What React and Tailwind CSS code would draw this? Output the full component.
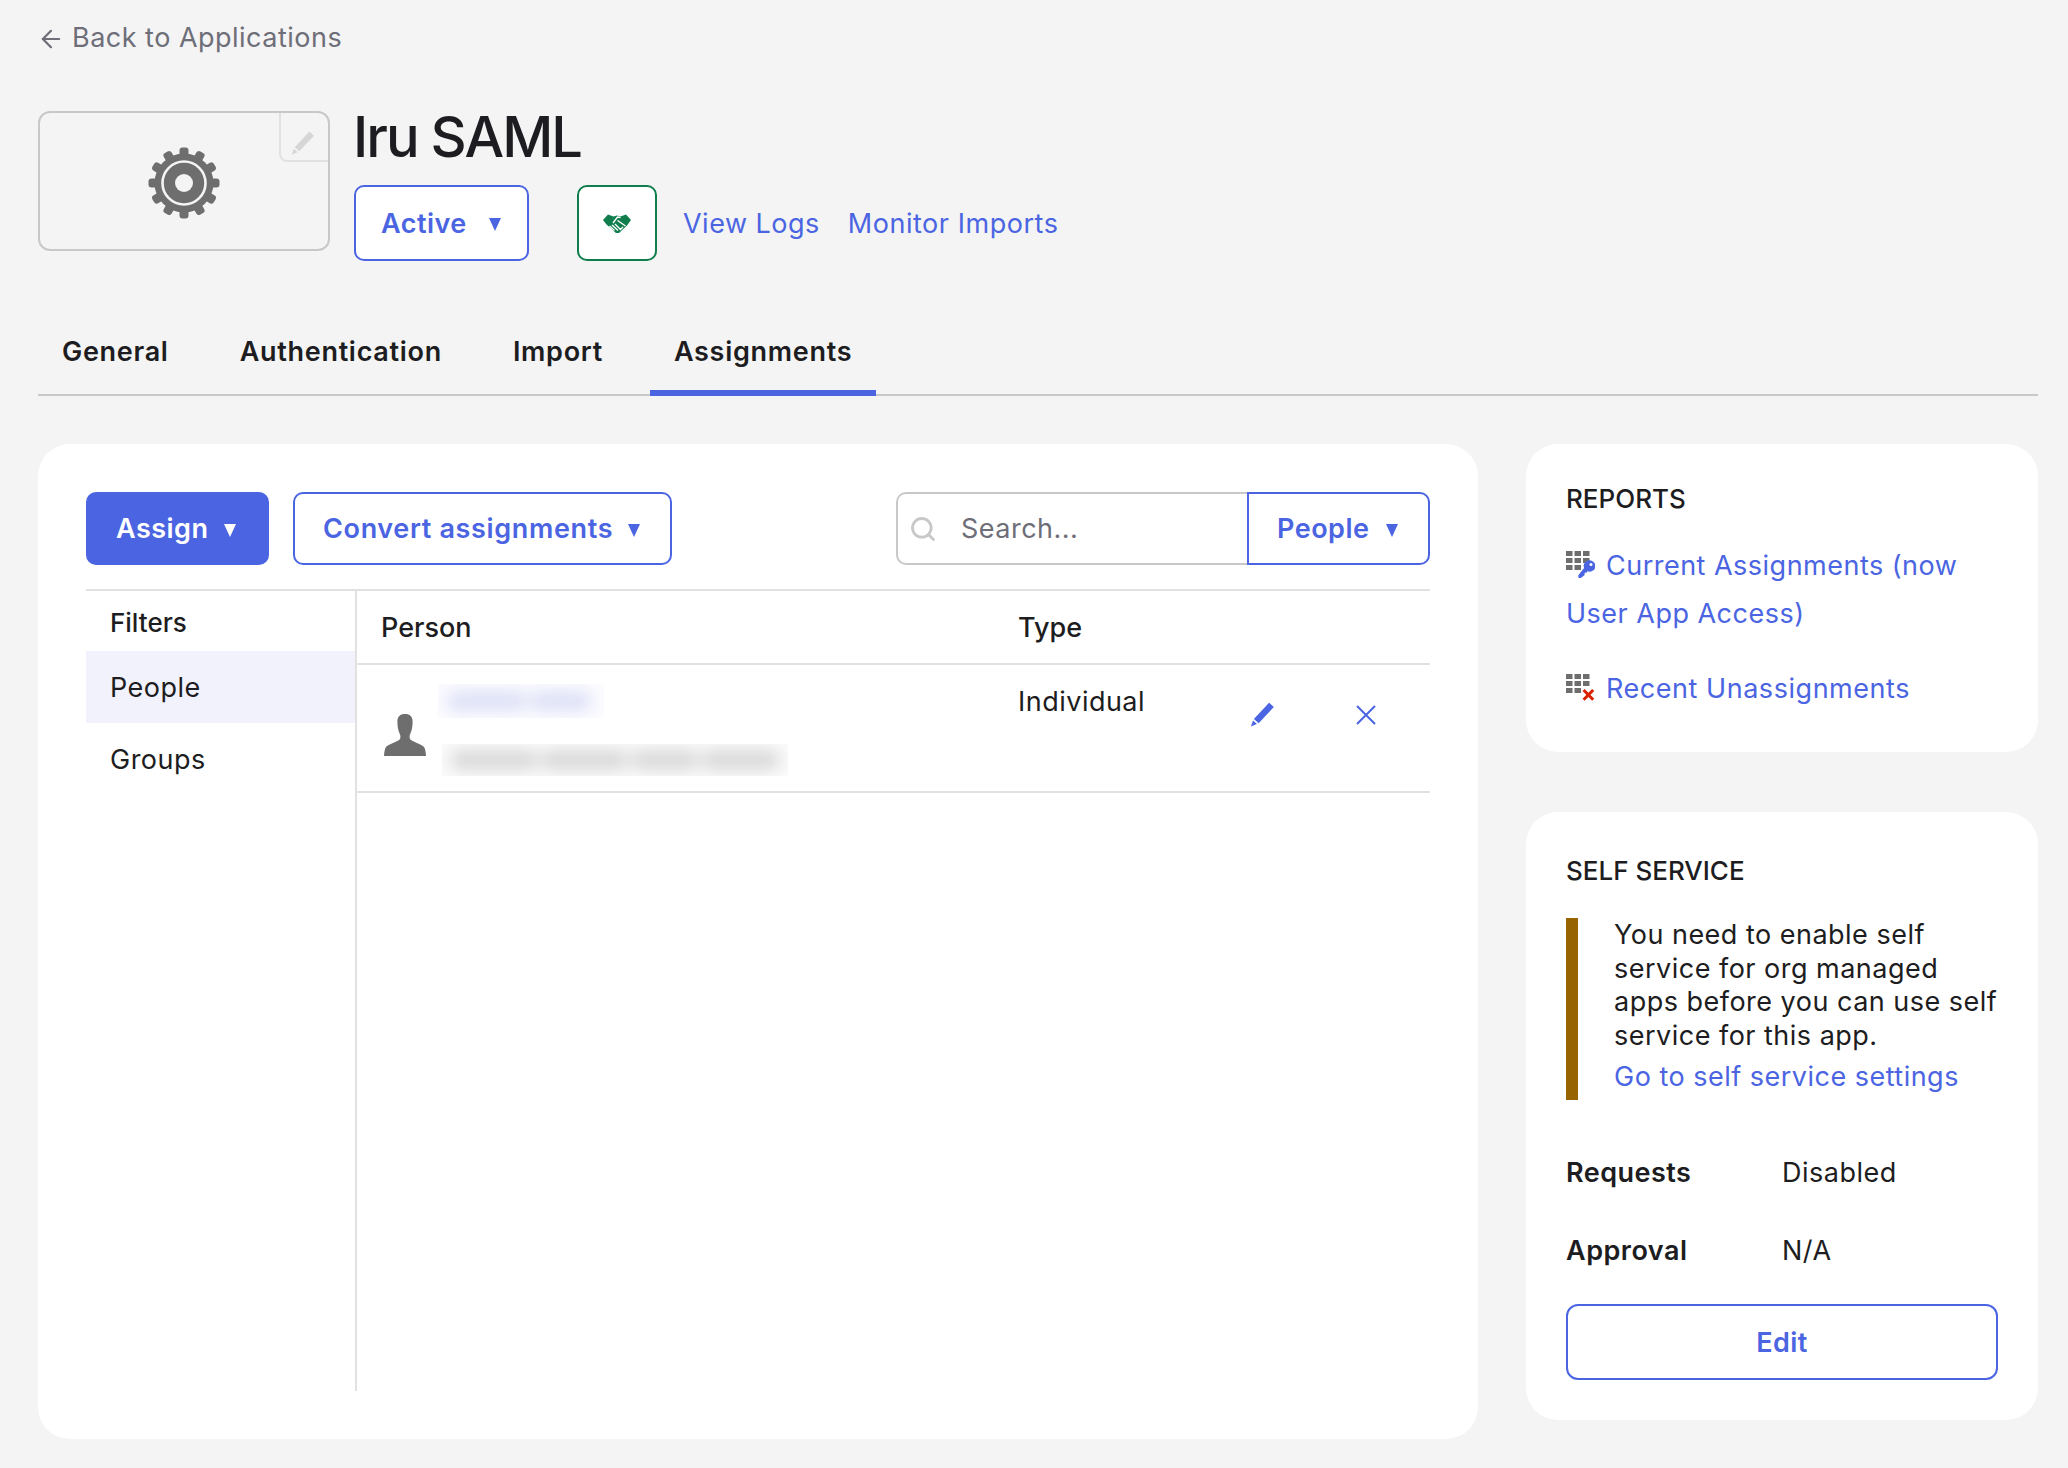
import React from "react";
import { ArrowLeft, Search } from "lucide-react";

const Caret = ({ className = "" }) => (
  <svg viewBox="0 0 14 14" className={`w-[14px] h-[14px] fill-current ${className}`}>
    <path d="M1 1h12L7 14z" />
  </svg>
);

const Gear = () => (
  <svg viewBox="0 0 72 72" className="w-[72px] h-[72px] mt-[4px] blur-[0.5px]">
    {Array.from({ length: 12 }).map((_, i) => (
      <rect key={i} x="31.500" y="0.5" width="9" height="12" rx="3" fill="#6e6e6e" transform={`rotate(${i * 30} 36 36)`} />
    ))}
    <circle cx="36" cy="36" r="29.500" fill="#6e6e6e" />
    <circle cx="36" cy="36" r="21.500" fill="none" stroke="#f4f4f4" strokeWidth="2.6" />
    <circle cx="36" cy="36" r="9" fill="#f4f4f4" />
  </svg>
);

const Pencil = ({ className = "" }) => (
  <svg viewBox="0 0 24 24" className={`fill-current ${className}`}>
    <path d="M17.600 1.500l4.400 4L8 20.500 3.600 16.500z" />
    <path d="M2.800 18l3.600 3.300L0.800 23.500z" />
  </svg>
);

const Handshake = () => (
  <svg viewBox="0 0 28 19" className="w-[28px] h-[19px]">
    <path fill="#0f7d4c" d="M0 6L5 .5l5.500 2L14 1.500l3.500 1L23 .5 28 6l-4 5.500-8 7.500h-3L3.500 10.500z" />
    <path fill="none" stroke="#fff" strokeWidth="1.400" d="M10 9l4.500-6 3 .5M14.500 6.500l8 5.500M9 11l6 5.500M6.500 12l5 4.500M12 10l5.500 5.500M20 13l-3 3" />
  </svg>
);

const GridRows = () => (
  <g fill="#6e6e6e">
    {[0, 7, 14].map((y) =>
      [0, 8.500, 17].map((x) => <rect key={`${x}-${y}`} x={x} y={y} width="6.500" height="5" />)
    )}
  </g>
);

const KeyGrid = () => (
  <svg viewBox="0 0 29 27" className="inline-block w-[29px] h-[27px] mr-[11px] align-[-3px]">
    <GridRows />
    <path d="M15 27l0-10 6-7h8v17z" fill="#fff" />
    <g fill="#4b65e2">
      <circle cx="23.500" cy="15" r="5.800" />
      <path d="M20.500 14l4 4.500-3.200.8-.3 2.200-2.200.3-.4 2.400-3.600 2.800-2.300-.1-.2-2.600z" />
    </g>
    <circle cx="25" cy="13.500" r="1.500" fill="#fff" />
  </svg>
);

const XGrid = () => (
  <svg viewBox="0 0 29 27" className="inline-block w-[29px] h-[27px] mr-[11px] align-[-3px]">
    <GridRows />
    <rect x="15" y="13" width="14" height="14" fill="#fff" />
    <path d="M17.600 16l9.600 9.800M27.200 16l-9.600 9.800" stroke="#d92200" strokeWidth="3" />
  </svg>
);

const Person = () => (
  <svg viewBox="0 0 42 42" className="w-[42px] h-[42px]">
    <path
      fill="#6e6e6e"
      d="M21 0c5 0 7.600 2.600 7.600 7.600 0 5-.7 9-2.400 12.400-.8 1.600-.9 4.300.2 5.600 1.400 1.600 11.600 5 13.600 7.400 1.200 1.500 1.800 5.500 2 9H0c.2-3.500.8-7.500 2-9 2-2.400 12.200-5.800 13.600-7.400 1.100-1.300 1-4 .2-5.600C14.100 16.600 13.400 12.600 13.400 7.600 13.400 2.600 16 0 21 0z"
    />
  </svg>
);

const Blurred = ({ className, bars, bg, bar }) => (
  <div className={`overflow-hidden ${bg} ${className}`}>
    <div className="flex items-center h-full gap-[2px] px-[8px] blur-[8px]">
      {bars.map((w, i) => (
        <div key={i} className={`h-[20px] rounded-full ${bar}`} style={{ width: w }} />
      ))}
    </div>
  </div>
);

export default function App() {
  return (
    <div className="min-h-[1468px] bg-[#f4f4f4] pl-[38px] pr-[30px] text-[#1d1d21] text-[27px] tracking-[0.018em] font-['Inter',sans-serif]">
      <a className="flex items-center h-[32px] relative top-[22px] pt-[1px] text-[#6e6e78]">
        <ArrowLeft className="w-[28px] h-[28px] -ml-[1px] mr-[7px]" strokeWidth={1.9} />
        <span>Back to Applications</span>
      </a>

      <div className="flex gap-[24px] pt-[79px]">
        <div className="relative flex items-center justify-center w-[292px] h-[140px] border-2 border-[#c8c8c8] rounded-[12px]">
          <Gear />
          <div className="absolute top-0 right-0 flex items-center justify-center w-[49px] h-[49px] border-l-2 border-b-2 border-[#e1e1e1] rounded-bl-[8px]">
            <Pencil className="w-[25px] h-[25px] mt-[12px] -ml-[3px] text-[#d6d6d6]" />
          </div>
        </div>
        <div>
          <h1 className="h-[52px] leading-[52px] -ml-[1px] text-[56px] font-medium tracking-[-2px]">Iru SAML</h1>
          <div className="flex items-center mt-[22px] h-[76px]">
            <button className="flex items-center justify-between w-[175px] h-[76px] pl-[25px] pr-[25px] pt-[2px] bg-white border-2 border-[#4b65e2] rounded-[10px] text-[#4b65e2] font-semibold">
              Active <Caret />
            </button>
            <button className="flex items-center justify-center w-[80px] h-[76px] ml-[48px] bg-white border-2 border-[#0f7d4c] rounded-[10px]">
              <Handshake />
            </button>
            <a className="ml-[26px] pt-[2px] text-[#4b65e2]">View Logs</a>
            <a className="ml-[28px] pt-[2px] tracking-[0.02em] text-[#4b65e2]">Monitor Imports</a>
          </div>
        </div>
      </div>

      <div className="flex gap-[23px] h-[90px] mt-[45px] border-b-2 border-[#c8c8c8] font-semibold tracking-[0.026em]">
        {["General", "Authentication", "Import", "Assignments"].map((t) => (
          <div
            key={t}
            className={`flex items-center h-[90px] -mb-[2px] px-[24px] pt-[8px] border-b-[6px] ${
              t === "Assignments" ? "border-[#4b65e2]" : "border-transparent"
            }`}
          >
            {t}
          </div>
        ))}
      </div>

      <div className="flex gap-[48px] mt-[48px]">
        <div className="w-[1440px] h-[995px] bg-white rounded-[32px] p-[48px]">
          <div className="flex justify-between h-[73px]">
            <div className="flex gap-[24px]">
              <button className="flex items-center justify-between w-[183px] pl-[30px] pr-[32px] pt-[2px] bg-[#4b65e2] rounded-[10px] text-white font-semibold">
                Assign <Caret />
              </button>
              <button className="flex items-center justify-between w-[379px] pl-[28px] pr-[29px] pt-[2px] bg-white border-2 border-[#4b65e2] rounded-[10px] text-[#4b65e2] font-semibold tracking-[0.024em]">
                Convert assignments <Caret />
              </button>
            </div>
            <div className="flex">
              <div className="flex items-center w-[351px] pl-[11px] pt-[2px] border-2 border-r-0 border-[#c8c8c8] rounded-l-[10px] text-[#6e6e78]">
                <Search className="w-[28px] h-[28px] -mt-[2px] text-[#c8c8c8]" strokeWidth={2.400} />
                <span className="ml-[24px]">Search...</span>
              </div>
              <button className="flex items-center justify-between w-[183px] pl-[28px] pr-[29px] pt-[2px] border-2 border-[#4b65e2] rounded-r-[10px] text-[#4b65e2] font-semibold">
                People <Caret />
              </button>
            </div>
          </div>

          <div className="flex h-[802px] mt-[24px] border-t-2 border-[#e1e1e1]">
            <div className="w-[271px] border-r-2 border-[#e1e1e1]">
              <div className="flex items-center h-[60px] px-[24px] pt-[2px] text-[26px] font-medium tracking-normal">Filters</div>
              <div className="flex items-center h-[72px] px-[24px] pt-[2px] bg-[#f1f2fc]">People</div>
              <div className="flex items-center h-[72px] px-[24px] pt-[2px]">Groups</div>
            </div>
            <div className="flex-1">
              <div className="grid grid-cols-[637px_200px_1fr] h-[74px] items-center border-b-2 border-[#e1e1e1] pt-[2px] font-medium tracking-normal">
                <div className="pl-[24px]">Person</div>
                <div className="pl-[24px]">Type</div>
              </div>
              <div className="grid grid-cols-[637px_200px_1fr] h-[128px] border-b-2 border-[#e1e1e1]">
                <div className="flex pl-[27px] pt-[19px]">
                  <div className="pt-[30px]"><Person /></div>
                  <div className="ml-[12px]">
                    <Blurred className="w-[166px] h-[34px]" bg="bg-[#fcfcff]" bar="bg-[#dde0f6]" bars={[82, 62]} />
                    <Blurred className="w-[346px] h-[32px] ml-[4px] mt-[26px]" bg="bg-[#fbfbfb]" bar="bg-[#d8d8d8]" bars={[90, 90, 70, 80]} />
                  </div>
                </div>
                <div className="pl-[24px] pt-[19px] leading-[36px]">Individual</div>
                <div className="flex items-start pl-[56px] pt-[36px] text-[#4b65e2]">
                  <Pencil className="w-[26px] h-[26px]" />
                  <svg viewBox="0 0 20 20" className="w-[20px] h-[20px] ml-[80px] mt-[4px]">
                    <path d="M1 1l18 18M19 1L1 19" stroke="currentColor" strokeWidth="2" fill="none" />
                  </svg>
                </div>
              </div>
            </div>
          </div>
        </div>

        <div className="flex flex-col gap-[60px] w-[512px]">
          <div className="h-[308px] bg-white rounded-[32px] px-[40px] pt-[37px]">
            <h2 className="h-[36px] leading-[36px] text-[26px] font-medium tracking-normal">REPORTS</h2>
            <div className="mt-[25px] w-[420px] leading-[47.500px] text-[#4b65e2]">
              <a><KeyGrid />Current Assignments (now User App Access)</a>
            </div>
            <div className="mt-[28px] leading-[48px] tracking-[0.02em] text-[#4b65e2]">
              <a><XGrid />Recent Unassignments</a>
            </div>
          </div>

          <div className="h-[608px] bg-white rounded-[32px] px-[40px] pt-[41px]">
            <h2 className="h-[36px] leading-[36px] text-[26px] font-medium tracking-normal">SELF SERVICE</h2>
            <div className="flex mt-[29px] h-[182px]">
              <div className="w-[12px] shrink-0 bg-[#966400]" />
              <div className="ml-[36px] w-[385px] shrink-0">
                <p className="leading-[33.500px]">You need to enable self service for org managed apps before you can use self service for this app.</p>
                <a className="block mt-[7px] leading-[36px] text-[#4b65e2]">Go to self service settings</a>
              </div>
            </div>
            <div className="flex items-center h-[36px] mt-[55px]">
              <span className="w-[216px] font-semibold">Requests</span><span>Disabled</span>
            </div>
            <div className="flex items-center h-[36px] mt-[42px]">
              <span className="w-[216px] font-semibold">Approval</span><span>N/A</span>
            </div>
            <button className="block w-[432px] h-[76px] mt-[35px] pt-[2px] border-2 border-[#4b65e2] rounded-[12px] text-[#4b65e2] font-semibold">Edit</button>
          </div>
        </div>
      </div>
    </div>
  );
}
